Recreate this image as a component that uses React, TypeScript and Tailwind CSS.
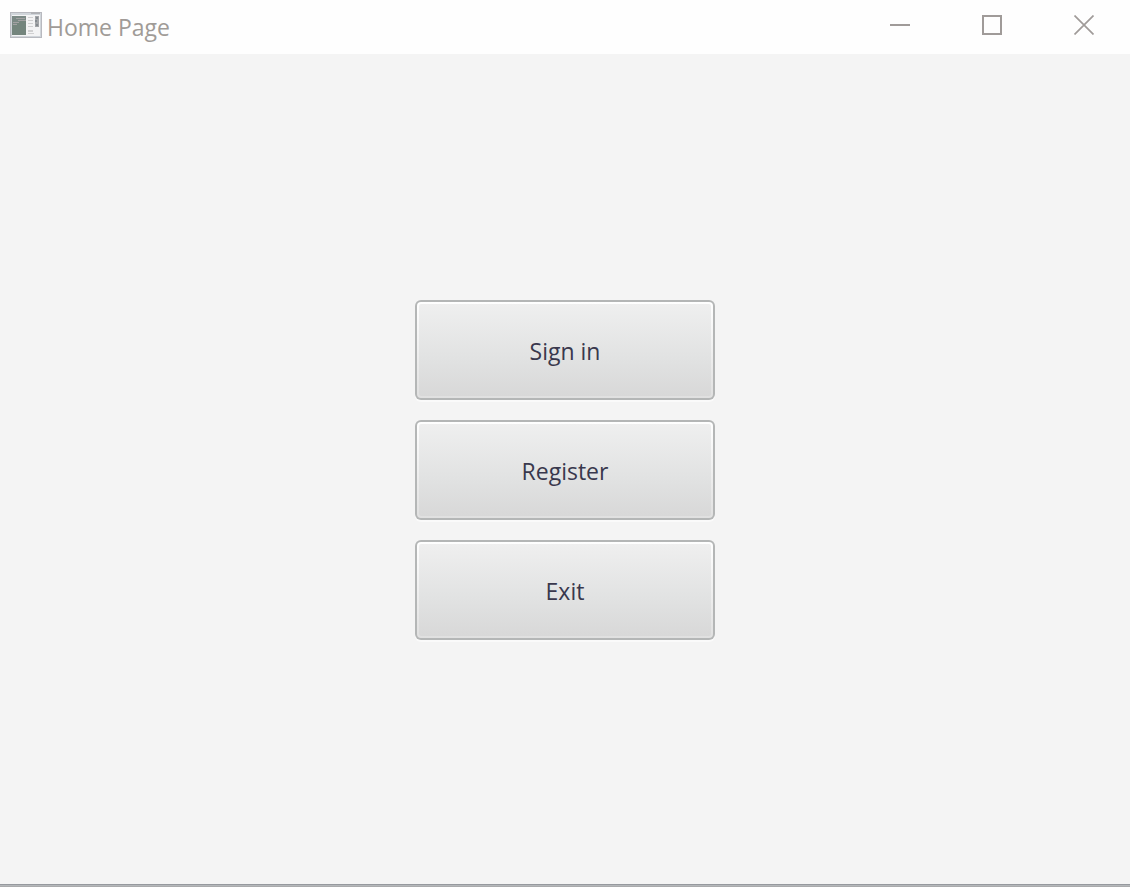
import React from "react";

const actions = ["Sign in", "Register", "Exit"];

function AppIcon() {
  return (
    <svg width="32" height="26" viewBox="0 0 32 26" shapeRendering="crispEdges" aria-hidden="true">
      <rect width="32" height="26" fill="#b8b9bf" />
      <rect x="1" y="1" width="30" height="24" fill="#d0d5da" />
      <rect x="2" y="3" width="28" height="21" fill="#f3f3f4" />
      <rect x="21" y="0" width="9" height="2" fill="#b0b1b5" />
      <rect x="2" y="4" width="14" height="19" fill="#74857d" />
      <path d="M2 4h14v5h-6v1H7v2H5v1H2z" fill="#7b8985" />
      <path d="M6 6h9v1H6zM8 8h8v1H8zM3 10h6v1H3zM3 12h4v1H3z" fill="#a3a2a3" />
      <path d="M18 5h5v1h-5zM18 8h5v1h-5zM18 11h5v1h-5zM18 14h5v1h-5zM18 18h5v2h-5zM18 21h6v1h-6z" fill="#d0d0d1" />
      <rect x="25" y="4" width="4" height="11" fill="#a3a5a8" />
      <path d="M26 5h2v2h-2zM25 8h2v2h-2zM26 12h2v2h-2z" fill="#858b90" />
    </svg>
  );
}

const controls = [
  { label: "Minimize", icon: <path d="M0 10h20" strokeWidth="2" shapeRendering="crispEdges" /> },
  { label: "Maximize", icon: <path d="M1 1h18v18H1z" strokeWidth="2" shapeRendering="crispEdges" /> },
  { label: "Close", icon: <path d="M.5.5l19 19M19.500.500l-19 19" strokeWidth="1.700" /> },
];

export default function App() {
  return (
    <div className="flex min-h-screen flex-col bg-[#f4f4f4] font-['Open_Sans','Noto_Sans',sans-serif]">
      <header className="flex h-[54px] shrink-0 items-start justify-between bg-[#fefefe]">
        <div className="flex h-[50px] items-center gap-[5px] pl-2.5">
          <AppIcon />
          <h1 className="pt-1 text-[23px] leading-8 text-[#a09b97]">Home Page</h1>
        </div>
        <div className="flex">
          {controls.map((control) => (
            <button
              key={control.label}
              type="button"
              aria-label={control.label}
              className="flex h-[50px] w-[92px] items-center justify-center"
            >
              <svg width="20" height="20" viewBox="0 0 20 20" fill="none" stroke="#a09b99">
                {control.icon}
              </svg>
            </button>
          ))}
        </div>
      </header>
      <main className="flex flex-1 flex-col items-center justify-center gap-5 pt-0.5">
        {actions.map((action) => (
          <button
            key={action}
            type="button"
            className="h-[100px] w-[300px] rounded-md bg-[#b4b6b6] p-0.5 text-[23px] text-[#39384d] shadow-[0_2px_0_#fafafa]"
          >
            <span className="block h-full rounded bg-linear-to-b from-white to-[#e0e0e0] p-0.5">
              <span className="flex h-full items-center justify-center rounded-xs bg-linear-to-b from-[#efefef] via-[#e1e2e2] via-60% to-[#d8d8d8] pt-0.5">
                {action}
              </span>
            </span>
          </button>
        ))}
      </main>
      <footer className="h-[3px] shrink-0 border-t border-[#96999e] bg-linear-to-b from-[#b9bdc0] to-[#a5a5a6]" />
    </div>
  );
}
